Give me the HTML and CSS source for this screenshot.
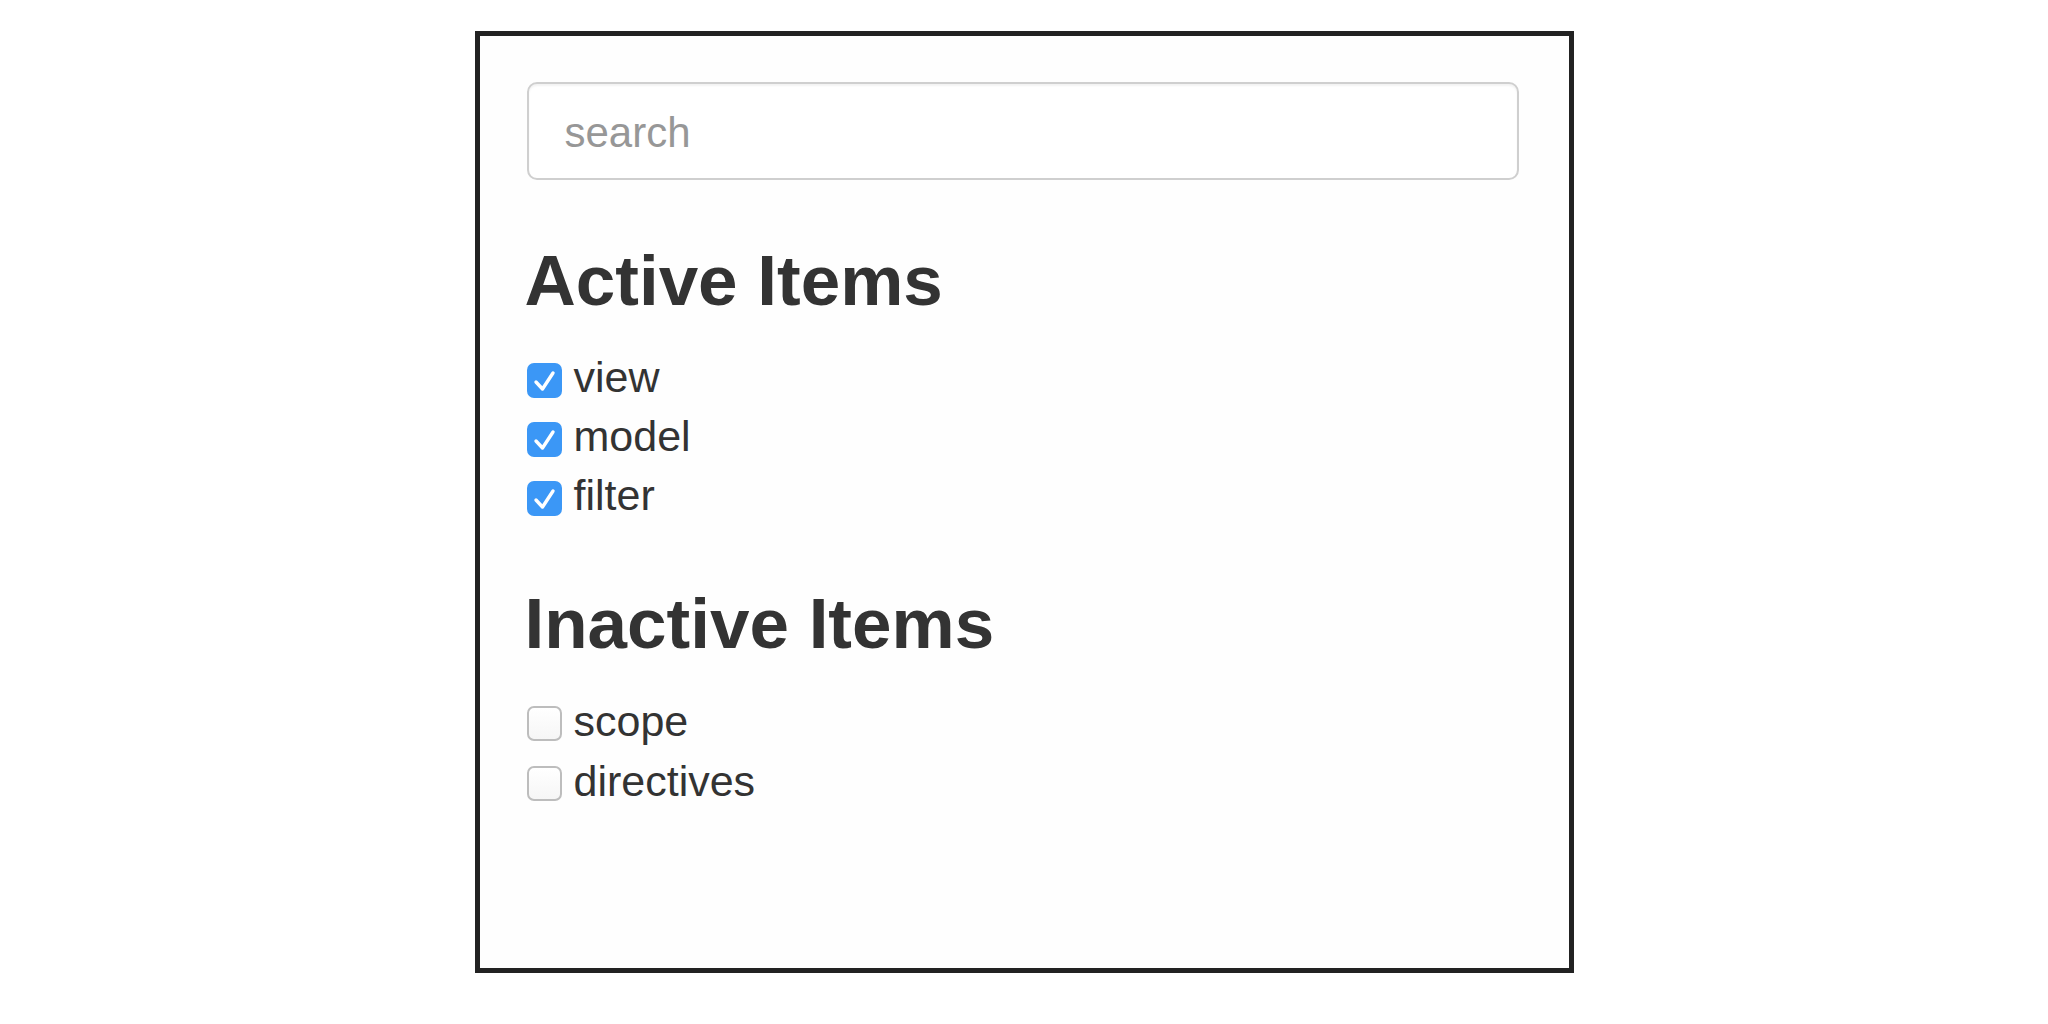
FILE: index.html
```html
<!DOCTYPE html>
<html lang="en">
<head>
<meta charset="utf-8">
<title>Items</title>
<link rel="stylesheet" href="styles.css">
</head>
<body>
<div class="panel">
  <input class="search" type="text" placeholder="search">

  <h2 class="section-title">Active Items</h2>
  <ul class="items">
    <li class="item">
      <span class="box box-checked"><svg viewBox="0 0 35 35" width="35" height="35"><path d="M9 19 L15.5 26 L26 10" fill="none" stroke="#fff" stroke-width="3.4" stroke-linecap="round" stroke-linejoin="round"/></svg></span>
      <span class="label">view</span>
    </li>
    <li class="item">
      <span class="box box-checked"><svg viewBox="0 0 35 35" width="35" height="35"><path d="M9 19 L15.5 26 L26 10" fill="none" stroke="#fff" stroke-width="3.4" stroke-linecap="round" stroke-linejoin="round"/></svg></span>
      <span class="label">model</span>
    </li>
    <li class="item">
      <span class="box box-checked"><svg viewBox="0 0 35 35" width="35" height="35"><path d="M9 19 L15.5 26 L26 10" fill="none" stroke="#fff" stroke-width="3.4" stroke-linecap="round" stroke-linejoin="round"/></svg></span>
      <span class="label">filter</span>
    </li>
  </ul>

  <h2 class="section-title section-second">Inactive Items</h2>
  <ul class="items items-inactive">
    <li class="item">
      <span class="box"></span>
      <span class="label">scope</span>
    </li>
    <li class="item">
      <span class="box"></span>
      <span class="label">directives</span>
    </li>
  </ul>
</div>
</body>
</html>
```

FILE: styles.css
```css
html, body {
  margin: 0;
  padding: 0;
  background: #ffffff;
}

body {
  font-family: "Liberation Sans", Arial, Helvetica, sans-serif;
  color: #333333;
  padding-top: 31px;
}

.panel {
  box-sizing: border-box;
  width: 1099px;
  height: 942px;
  margin: 0 auto;
  border: 5px solid #222222;
  background: #fefefe;
  padding: 46px 50px 0 47px;
  display: flex;
  flex-direction: column;
}

.search {
  box-sizing: border-box;
  display: block;
  width: 100%;
  height: 98px;
  margin: 0;
  padding: 4px 36px 0;
  border: 2px solid #cfcfcf;
  border-radius: 10px;
  background: #ffffff;
  box-shadow: inset 0 2px 2px rgba(0, 0, 0, 0.05);
  font-family: "Liberation Sans", Arial, Helvetica, sans-serif;
  font-size: 42px;
  color: #555555;
  outline: none;
}

.search::placeholder {
  color: #979797;
  opacity: 1;
}

.section-title {
  margin: 62px 0 29px -2px;
  font-size: 71px;
  line-height: 77px;
  font-weight: bold;
  color: #333333;
}

.section-second {
  margin-top: 60px;
  margin-left: -2px;
}

.items {
  list-style: none;
  margin: 0;
  padding: 0;
}

.item {
  display: flex;
  align-items: center;
  height: 59px;
  font-size: 43px;
  line-height: 59px;
}

.items-inactive .item {
  height: 60px;
}

.box {
  box-sizing: border-box;
  flex: 0 0 auto;
  width: 35px;
  height: 35px;
  margin-top: 5px;
  margin-right: 12px;
  border-radius: 7px;
  border: 2px solid #bdbdbd;
  background: linear-gradient(#ffffff, #f6f6f6);
  display: flex;
  align-items: center;
  justify-content: center;
}

.box svg {
  display: block;
}

.box-checked {
  border: none;
  background: #3b97f6;
}

.label {
  color: #333333;
}
```
